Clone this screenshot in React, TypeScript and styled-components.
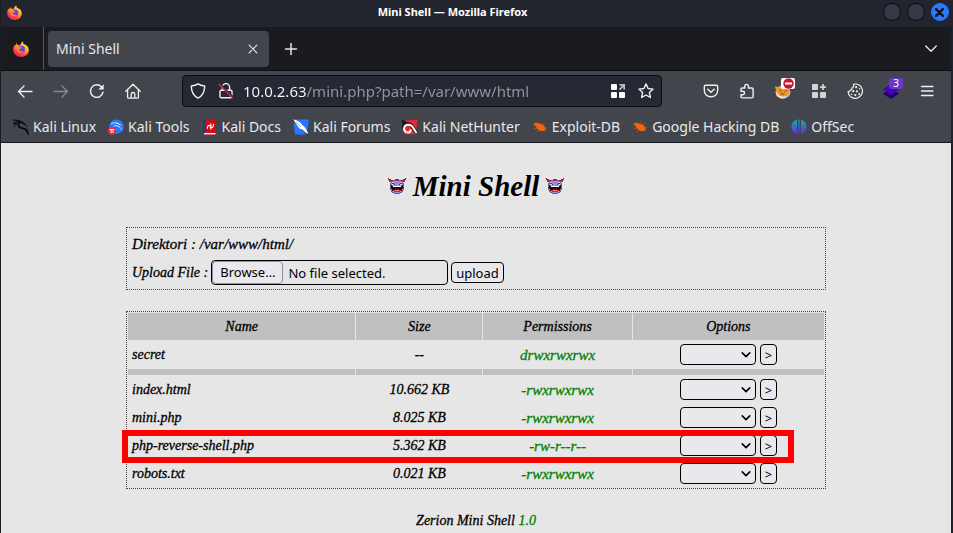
import React from "react";
import styled, { createGlobalStyle } from "styled-components";

const uiFont = `"Noto Sans", "Open Sans", sans-serif`;
const scriptFont = `"Z003", "URW Chancery L", "Monotype Corsiva", "Liberation Serif", serif`;

const GlobalStyle = createGlobalStyle`
  *, *::before, *::after { box-sizing: border-box; }
  body { margin: 0; background: #e6e6e6; overflow: hidden; }
  button, input, select { font: inherit; color: inherit; margin: 0; }
  svg { display: block; flex: none; }
`;

const Window = styled.div`
  display: flex;
  flex-direction: column;
  height: 100vh;
  overflow: hidden;
  border-left: 1px solid #1b1c22;
  border-right: 2px solid #1f222b;
  background: #e6e6e6;
  font-family: ${uiFont};
`;

const TitleBar = styled.header`
  display: flex;
  align-items: center;
  justify-content: space-between;
  flex: none;
  height: 27px;
  padding: 0 2px 3px 6px;
  background: #23252e;
  color: #fff;
`;

const WindowTitle = styled.span`
  font-size: 11px;
  line-height: 16px;
  font-weight: 700;
`;

const WindowButtons = styled.div`
  display: flex;
  justify-content: flex-end;
  gap: 6px;
`;

const WindowButton = styled.button<{ $close?: boolean }>`
  display: grid;
  place-items: center;
  width: 18px;
  height: 18px;
  padding: 0;
  border: 1px solid ${(p) => (p.$close ? "#2777ff" : "#0b0c0f")};
  border-radius: 50%;
  background: ${(p) => (p.$close ? "#2777ff" : "#353945")};
  color: ${(p) => (p.$close ? "#10131a" : "#fff")};
`;

const TabBar = styled.div`
  display: flex;
  align-items: center;
  flex: none;
  height: 44px;
  background: #1a1b1f;
  border-bottom: 1px solid #0e0f12;
  color: #e6e6e8;
`;

const PinnedTab = styled.button`
  display: grid;
  place-items: center;
  width: 43px;
  height: 43px;
  padding: 0 2px 0 0;
  border: 0;
  border-right: 1px solid #56585e;
  background: none;
`;

const Tab = styled.div`
  display: flex;
  align-items: center;
  justify-content: space-between;
  width: 221px;
  height: 36px;
  margin-left: 4px;
  padding: 0 8px;
  border-radius: 4px;
  background: #42454c;
  font-size: 14px;
  line-height: 20px;
`;

const IconButton = styled.button<{ $dim?: boolean }>`
  position: relative;
  display: grid;
  place-items: center;
  width: 36px;
  height: 32px;
  padding: 0;
  border: 0;
  background: none;
  opacity: ${(p) => (p.$dim ? 0.4 : 1)};
`;

const SmallButton = styled.button`
  display: grid;
  place-items: center;
  width: 16px;
  height: 20px;
  padding: 0;
  border: 0;
  background: none;
`;

const TabListButton = styled(IconButton)`
  margin: 0 2px 0 auto;
`;

const NewTabButton = styled(IconButton)`
  margin-left: 4px;
`;

const NavBar = styled.nav`
  display: flex;
  align-items: center;
  flex: none;
  height: 40px;
  padding: 0 6px;
  background: #42454c;
  color: #f0f0f1;
`;

const UrlBox = styled.div`
  display: flex;
  align-items: center;
  flex: 1;
  min-width: 0;
  height: 32px;
  margin: 0 31px;
  padding: 0 7px;
  border: 1px solid #0c0d10;
  border-radius: 4px;
  background: #262834;
  gap: 12px;
`;

const UrlInput = styled.input`
  flex: 1;
  min-width: 0;
  height: 24px;
  padding: 0;
  margin-left: -3px;
  border: 0;
  outline: 0;
  font-size: 15px;
  line-height: 24px;
  color: transparent;
  background: linear-gradient(90deg, #fbfbfe 64px, #96979e 64px);
  background-clip: text;
  -webkit-background-clip: text;
`;

const Bookmarks = styled.div`
  display: flex;
  align-items: center;
  flex: none;
  height: 32px;
  padding: 0 12px;
  gap: 12px;
  background: #42454c;
  border-bottom: 1px solid #17181c;
  color: #e9e9ea;
`;

const Bookmark = styled.a`
  display: flex;
  align-items: center;
  gap: 4px;
  color: inherit;
  text-decoration: none;
  white-space: nowrap;
  font-size: 14px;
  line-height: 20px;
`;

const Badge = styled.span<{ $alert?: boolean }>`
  position: absolute;
  top: 3px;
  left: 16px;
  display: grid;
  place-items: center;
  width: 14px;
  height: 11px;
  border-radius: 2px;
  background: ${(p) => (p.$alert ? "#fff" : "#6b38c8")};
  color: #fff;
  font-size: 10px;
  line-height: 11px;
`;

const Page = styled.main`
  display: flex;
  flex-direction: column;
  align-items: center;
  flex: 1;
  min-height: 0;
  overflow: hidden;
  padding: 22px 20px 0;
  color: #000;
  font-family: ${scriptFont};
  font-style: italic;
  font-size: 14px;
  line-height: 20px;
  -webkit-text-stroke: 0.3px currentColor;
`;

const Heading = styled.h1`
  display: flex;
  align-items: center;
  gap: 7px;
  height: 42px;
  margin: 0 0 20px;
  font-size: 29px;
  line-height: 42px;
  font-weight: 700;
  -webkit-text-stroke: 0;
`;

const Panel = styled.form`
  display: flex;
  flex-direction: column;
  width: 100%;
  max-width: 700px;
  height: 63px;
  margin-bottom: 21px;
  padding: 4px 5px;
  gap: 4px;
  border: 1px dotted #444;
`;

const PanelLine = styled.div`
  display: flex;
  align-items: center;
  min-height: 25px;
  gap: 3px;
`;

const DirectoryLine = styled.div`
  min-height: 24px;
  font-size: 15px;
  line-height: 24px;
`;

const FileBox = styled.span`
  position: relative;
  display: flex;
  align-items: center;
  width: 237px;
  height: 25px;
  border: 1px solid #000;
  border-radius: 4px;
  font: normal 13px/18px ${uiFont};
  -webkit-text-stroke: 0;
`;

const FileInput = styled.input`
  position: absolute;
  inset: 0;
  width: 100%;
  opacity: 0;
`;

const BrowseFace = styled.span`
  height: 23px;
  margin-right: 5px;
  padding: 0 7px;
  border: 1px solid #8f8f9d;
  border-radius: 4px;
  background: #e9e9ed;
  line-height: 21px;
`;

const PlainButton = styled.button`
  height: 21px;
  padding: 0 4px;
  border: 1px solid #000;
  border-radius: 4px;
  background: #e9e9ed;
  font: normal 13px/18px ${uiFont};
  -webkit-text-stroke: 0;
`;

const Listing = styled.table`
  width: 100%;
  max-width: 700px;
  table-layout: fixed;
  border-collapse: separate;
  border-spacing: 1px;
  border: 1px dotted #444;
`;

const HeadCell = styled.th<{ $share: number }>`
  width: ${(p) => p.$share / 10}%;
  height: 27px;
  padding: 0;
  background: #c0c0c0;
  font-weight: 400;
`;

const Row = styled.tr`
  position: relative;
`;

const Cell = styled.td<{ $left?: boolean; $green?: boolean }>`
  height: 27px;
  padding: 0 4px;
  text-align: ${(p) => (p.$left ? "left" : "center")};
  color: ${(p) => (p.$green ? "#008000" : "inherit")};
  font-size: ${(p) => (p.$green ? 15 : 14)}px;
`;

const DividerCell = styled.td`
  height: 6px;
  padding: 0;
  background: #c0c0c0;
`;

const Highlight = styled.span`
  position: absolute;
  z-index: 1;
  top: -2px;
  bottom: -4px;
  left: -6px;
  right: 30px;
  border: 6px solid #f00;
  pointer-events: none;
`;

const Options = styled.div`
  display: flex;
  justify-content: center;
  gap: 4px;
`;

const SelectWrap = styled.span`
  display: grid;
  width: 76px;
  height: 21px;
  align-items: center;
  > * { grid-area: 1 / 1; }
  > svg { justify-self: end; margin-right: 5px; pointer-events: none; }
`;

const Select = styled.select`
  appearance: none;
  width: 100%;
  height: 21px;
  border: 1px solid #000;
  border-radius: 4px;
  background: #e9e9ed;
`;

const Footer = styled.footer`
  margin-top: 22px;
  span { color: #008000; }
`;

const line = { fill: "none", stroke: "currentColor", strokeLinecap: "round", strokeLinejoin: "round" } as const;

const Firefox = ({ size, id }: { size: number; id: string }) => (
  <svg width={size} height={size} viewBox="0 0 16 16">
    <defs>
      <linearGradient id={id} x1="0.8" y1="0" x2="0.25" y2="1">
        <stop offset="0" stopColor="#fff04a" />
        <stop offset="0.45" stopColor="#ff9a2c" />
        <stop offset="0.75" stopColor="#ff4040" />
        <stop offset="1" stopColor="#e8188f" />
      </linearGradient>
    </defs>
    <path d="M10.2.2c-.3 1.500-.1 2.300.9 3.100C13.700 4 15.800 5.900 15.800 9c0 4-3.400 6.900-7.700 6.900S.2 12.700.2 8.700c0-2 .6-3.500 1.600-4.900l.3 1.200L3.600 2l.9 2c.9-.2 2 0 2.700.4C7.500 2.500 8.700 1 10.200.2Z" fill={`url(#${id})`} />
    <circle cx="8.500" cy="8.300" r="3.500" fill="#6b45d8" />
    <path d="M3.700 5.300c1.400-.6 2.800-.1 3.700.8l1.800.5c-.6 1-2.500.9-3 1.900-.3 1.200.8 2.300 2.300 1.800 1.300-.4 1.800.1 1.100.9-2.200 1.900-5.800.2-6-2.800Z" fill="#ff8a24" />
    <path d="M12.200 4.200c2 1.600 2.700 4.100 1.900 6.500-.1-2.300-.8-4.200-1.900-6.500Z" fill="#ffd83b" />
  </svg>
);

const Close = ({ width = 1.2, size = 10 }: { width?: number; size?: number }) => (
  <svg width={size} height={size} viewBox="0 0 10 10" {...line} strokeWidth={width}>
    <path d="m1.200 1.200 7.600 7.600m0-7.600-7.600 7.600" />
  </svg>
);

const Icon = ({ children, width = 1.3 }: { children: React.ReactNode; width?: number }) => (
  <svg width="16" height="16" viewBox="0 0 16 16" {...line} strokeWidth={width}>{children}</svg>
);

const Back = () => <Icon><path d="M15 8.500H1.500M7 3 1.500 8.500 7 14" /></Icon>;
const Forward = () => <Icon><path d="M1 8.500h13.500M9 3 14.500 8.500 9 14" /></Icon>;
const Reload = () => (
  <Icon width={1.4}>
    <path d="M14 9.200A6.300 6.300 0 1 1 12.600 4" />
    <path d="M14.700 1.200v5.300H9.400Z" fill="currentColor" stroke="none" />
  </Icon>
);
const Home = () => (
  <Icon><path d="m.8 8.300 7.200-7 7.200 7M2.600 7v7.300c0 .6.300.9.900.9h9c.6 0 .9-.3.9-.9V7M6.200 15v-4c0-2 3.600-2 3.600 0v4" /></Icon>
);
const Shield = () => (
  <Icon width={1.4}><path d="M8 .9c2 1.400 4.300 1.900 6.700 2.100 0 5.500-1.600 9.500-6.700 12.100C2.900 12.500 1.300 8.500 1.300 3 3.700 2.800 6 2.300 8 .9Z" /></Icon>
);
const InsecureLock = () => (
  <Icon width={1.4}>
    <path d="M4.400 7V4.200a3.600 3.600 0 0 1 7.200 0V7M3.300 7.300h9.400c.8 0 1.300.5 1.300 1.200v5c0 .7-.5 1.300-1.300 1.300H3.300c-.8 0-1.300-.6-1.300-1.300v-5c0-.7.5-1.200 1.300-1.200Z" />
    <path d="M2.600 1.500 15 13.900" stroke="#262834" strokeWidth="1.500" />
    <path d="M1.200 1.500 14.500 14.800" stroke="#e22850" />
  </Icon>
);
const AppGrid = () => (
  <svg width="16" height="16" viewBox="0 0 16 16" fill="#fff">
    <rect x="1" y="1" width="6" height="6" rx="1" /><rect x="1" y="9" width="6" height="6" rx="1" /><rect x="9" y="9" width="6" height="6" rx="1" />
    <path d="M9.500 1H15v5.500h-1.700V4l-3.200 3.200L8.900 6l3.200-3.300H9.500Z" fill="#bdbec2" />
  </svg>
);
const Star = () => (
  <Icon width={1.4}><path d="m8 .9 2.100 4.600 5 .6-3.700 3.400 1 5L8 12l-4.400 2.500 1-5L.9 6.100l5-.6Z" /></Icon>
);
const Pocket = () => (
  <Icon width={1.4}><path d="M2.800 2.300h10.400c.9 0 1.500.6 1.500 1.500v3.500c0 3.700-2.800 6.400-6.700 6.400S1.300 11 1.300 7.300V3.800c0-.9.600-1.500 1.500-1.500ZM4.800 6.300 8 9.300l3.200-3" /></Icon>
);
const Puzzle = () => (
  <Icon width={1.4}><path d="M2 8.300V6.100c0-.7.400-1.100 1.100-1.100h2.700V3.200c0-2.500 3.600-2.500 3.600 0V5h3.500c.8 0 1.200.4 1.200 1.100v7.700c0 .7-.4 1.100-1.200 1.100H3.100c-.7 0-1.100-.4-1.100-1.100v-2.100h1.800c2.300 0 2.300-3.400 0-3.400Z" /></Icon>
);
const Foxy = () => (
  <svg width="18" height="18" viewBox="0 0 18 18">
    <ellipse cx="9" cy="10" rx="7.500" ry="6.800" fill="#b8b4ae" />
    <path d="m.8 4 3.500 1.500h8L15 7c1 4-1.500 7-6 7.500C4.500 14.500 2 11.500 2 8Z" fill="#f49425" />
    <path d="m1.700 9 3.300 4.500 4 1.200 3-.7-1 2-4 .5-4-2.500Z" fill="#fbe6cd" />
    <path d="m5.500 8 2 1.500M12.500 8l-2 2M6.500 12h4" stroke="#6c4a25" fill="none" />
  </svg>
);
const NoEntry = () => (
  <svg width="11" height="11" viewBox="0 0 11 11"><circle cx="5.500" cy="5.500" r="5.200" fill="#c41930" /><rect x="2" y="4.500" width="7" height="2" fill="#fff" /></svg>
);
const AddGrid = () => (
  <svg width="16" height="16" viewBox="0 0 16 16" fill="#d2d3d5">
    <rect x="1" y="1" width="6" height="6" rx="1" /><rect x="1" y="9" width="6" height="6" rx="1" /><rect x="9" y="9" width="6" height="6" rx="1" />
    <path d="M11.200 1h1.700v2.200H15v1.700h-2.100V7h-1.700V4.900H9V3.200h2.200Z" />
  </svg>
);
const Cookie = () => (
  <Icon width={1.2}>
    <path d="M6.500 1.300C8 .9 10 .9 11.500 1.700a7.200 7.200 0 1 1-10.400 7c1.300.2 2-.4 2-1.600 1.400 0 2.100-.8 1.800-2.100 1.500-.3 2.200-1.700 1.600-3.700Z" />
    <g fill="currentColor" stroke="none"><circle cx="9.200" cy="4.200" r="1.100" /><circle cx="6.300" cy="8.200" r="1.100" /><circle cx="10" cy="8.300" r="1.100" /><circle cx="12.600" cy="5.800" r=".8" /><circle cx="8.300" cy="12" r="1.100" /><circle cx="12.200" cy="11" r=".9" /><circle cx="4.600" cy="11.300" r=".8" /></g>
  </Icon>
);
const Layers = () => (
  <svg width="18" height="18" viewBox="0 0 18 18"><path d="m9 6.500 8 5L9 17l-8-5.500Z" fill="#20006d" /><path d="m9 1.800 8 5.600-8 5.600-8-5.600Z" fill="#4a00b4" /></svg>
);
const Menu = () => <Icon><path d="M2.500 3.500h11.500M2.500 8h11.500M2.500 12.500h11.500" /></Icon>;

const KaliLinux = () => (
  <svg width="16" height="16" viewBox="0 0 16 16" fill="none" stroke="#08090b" strokeLinecap="round">
    <path d="M.8 1.200C3.500 1 6.500 1.500 9 3.200" strokeWidth="1.200" />
    <path d="M.9 4.700C3 3 6 2.700 9 3.500l2.500 1.700" strokeWidth="1.600" />
    <path d="M1.200 7.500C2.500 5.500 4.200 4.800 6 4.500" strokeWidth="1" />
    <path d="M6 4.300C5 6 5.300 8.200 8 8.800c3.500.6 6 1.400 7 6.200" strokeWidth="1.700" />
    <path d="M9.500 3.500c.7 1.500 2.500 1.700 4.700 4M8.500 9.200c2.500.3 4.500.5 6.500 2" strokeWidth="1" />
  </svg>
);
const KaliTools = () => (
  <svg width="16" height="16" viewBox="0 0 16 16">
    <circle cx="8.500" cy="7.700" r="7.300" fill="#2777ff" />
    <path d="M3 5c3-2 6-1.500 8.500.8M5.500 7.200c3-1.500 6.500.3 8 3.300M8 4.200c2 .2 4 1 5.200 2.500" stroke="#dbe9ff" strokeWidth="1" fill="none" />
    <circle cx="4" cy="11.700" r="4" fill="#ee2d36" />
    <path d="M1.700 10.500h4.600M3.200 10.500v3.400M5 10.500v3.400" stroke="#fff" fill="none" />
  </svg>
);
const KaliDocs = () => (
  <svg width="16" height="16" viewBox="0 0 16 16">
    <path d="M1.500.5h12v15h-12Z" fill="#d30f14" /><path d="M1.500.5h2v14h-2Z" fill="#14407d" /><path d="M2 14h11.500v1.400H2Z" fill="#efefef" />
    <path d="M11.500 5c-.2 3-1.200 4-2.500 3.500-1.500-.6-.5-2-2-2.300-1.300 0-1.600 2-1.500 3.600M8.800 4.500v6" stroke="#fff" strokeWidth="1.100" fill="none" />
  </svg>
);
const KaliForums = () => (
  <svg width="16" height="16" viewBox="0 0 16 16">
    <path d="M0 .5h16L13.700 15.500H2Z" fill="#2777ff" />
    <path d="M0 .5 8 8l7.500 7.500" stroke="#17191f" strokeWidth="2.500" fill="none" />
    <path d="M0 .3c4 1 7 2.700 8.500 4.500.2 1 .8 1.500 1.700 2C12.500 8.500 14 11.500 15.700 15.500c-3-1.500-5-3.500-6.200-5-1.500.2-3.500-1-4.500-3C3.500 5.500 2 3.500 0 .3Z" fill="#fff" />
    <path d="M3 3.200 8 8" stroke="#8e9299" strokeWidth=".7" />
  </svg>
);
const NetHunter = () => (
  <svg width="16" height="16" viewBox="0 0 16 16">
    <path d="M3 1.500 15.500.7l-2 14.500H3L.8 8Z" fill="#ed2633" />
    <path d="M0 .5 6.500 4 .8 8Z" fill="#17191f" />
    <path d="M1.500 9.500C1.500 5.500 6 3.500 9.300 6.200L14.500 14" stroke="#17191f" strokeWidth="3.500" fill="none" />
    <path d="M4.500 13.500C.5 11 2 6.300 5.500 5.800c4.500-.8 5.500 3.200 9 8.200M5 13.500c2.500.5 4-1 3.500-3" stroke="#fff" strokeWidth="2" fill="none" />
  </svg>
);
const ExploitBug = () => (
  <svg width="16" height="16" viewBox="0 0 16 16">
    <path d="M2 4.300c2-.9 4.200-.4 5.500.6 3.500 0 6 2 6.300 5.600-2 2.400-6.300 1.800-8.200-.6C4.200 9.200 3.300 8 3.500 6.700 2.500 6.200 2 5.300 2 4.300Z" fill="#f0640f" />
    <path d="M4.500 6.500.8 6M5.500 9l-3.700.7M7 11l-2.500 2M7.500 5 9 2.800M10 6l2.800-1.400M12.500 8.500l2.700.3M12 11l2 2" stroke="#a9571f" strokeWidth=".8" fill="none" />
  </svg>
);
const OffSec = () => (
  <svg width="16" height="16" viewBox="0 0 16 16">
    <defs><linearGradient id="offsec" x1="0" y1="0" x2="0" y2="1"><stop offset="0" stopColor="#0eb0b2" /><stop offset="1" stopColor="#6725d5" /></linearGradient></defs>
    <path d="M6 .7v14.600C2.800 14.500.5 11.700.5 8S2.800 1.500 6 .7ZM10 .7c3.200.8 5.500 3.600 5.500 7.300s-2.300 6.500-5.500 7.300ZM7.400.5h1.200v15H7.400Z" fill="url(#offsec)" />
  </svg>
);

const Devil = () => (
  <svg width="18" height="17" viewBox="0 0 18 17" shapeRendering="crispEdges">
    <path d="M5 2h8v1h2v2h1v7h-1v2h-1v1h-2v1H6v-1H4v-1H3v-2H2V5h1V3h2Z" fill="#6d6389" />
    <path d="M5 3h8v1h1v1h1v7h-1v2h-2v1H6v-1H4v-2H3V5h1V4h1Z" fill="#a286e8" />
    <path d="M4 6h3v1H4ZM11 6h3v1h-3ZM4 4h2v1H4ZM12 4h2v1h-2Z" fill="#d6c9ff" />
    <path d="M4 5h2v1h1v1H6V6H4ZM14 5h-2v1h-1v1h1V6h2Z" fill="#3a2b66" />
    <path d="M3 7h1v1h10V7h1v4h-1v2h-2v1H6v-1H4v-2H3Z" fill="#120d16" />
    <path d="M5 8h8v1H5Z" fill="#fff" />
    <path d="M5 12h2v-1h1v1h2v-1h1v1h2v1h-1v1H6v-1H5Z" fill="#ee1c24" />
    <path d="M7 12h4v1H7Z" fill="#ff7a7f" />
    <path d="M7 14h4v1H7Z" fill="#7f9ce0" />
    <path d="M0 0h1v1h2v1h2v1H3v1H1V2H0ZM17 0h1v2h-1v2h-2V3h-2V2h2V1h2ZM7 1h4v1h-1v1H8V2H7Z" fill="#a8243c" />
  </svg>
);

const Chevron = ({ size = 12, width = 1.5 }: { size?: number; width?: number }) => (
  <svg width={size} height={size} viewBox="0 0 12 12" {...line} strokeWidth={width}><path d="m1.500 3.500 4.500 4.500 4.500-4.500" /></svg>
);

const bookmarks = [
  { name: "Kali Linux", icon: <KaliLinux /> },
  { name: "Kali Tools", icon: <KaliTools /> },
  { name: "Kali Docs", icon: <KaliDocs /> },
  { name: "Kali Forums", icon: <KaliForums /> },
  { name: "Kali NetHunter", icon: <NetHunter /> },
  { name: "Exploit-DB", icon: <ExploitBug /> },
  { name: "Google Hacking DB", icon: <ExploitBug /> },
  { name: "OffSec", icon: <OffSec /> },
];

type Entry = { name: string; size: string; mode: string; marked?: boolean };

const directories: Entry[] = [{ name: "secret", size: "--", mode: "drwxrwxrwx" }];
const files: Entry[] = [
  { name: "index.html", size: "10.662 KB", mode: "-rwxrwxrwx" },
  { name: "mini.php", size: "8.025 KB", mode: "-rwxrwxrwx" },
  { name: "php-reverse-shell.php", size: "5.362 KB", mode: "-rw-r--r--", marked: true },
  { name: "robots.txt", size: "0.021 KB", mode: "-rwxrwxrwx" },
];

const EntryRow = ({ entry }: { entry: Entry }) => (
  <Row>
    <Cell $left>{entry.name}{entry.marked && <Highlight />}</Cell>
    <Cell>{entry.size}</Cell>
    <Cell $green>{entry.mode}</Cell>
    <Cell>
      <Options>
        <SelectWrap>
          <Select aria-label={`Options ${entry.name}`}><option value="" /></Select>
          <Chevron size={10} width={1.9} />
        </SelectWrap>
        <PlainButton type="button">&gt;</PlainButton>
      </Options>
    </Cell>
  </Row>
);

export default function App() {
  return (
    <Window>
      <GlobalStyle />
      <TitleBar>
        <Firefox size={15} id="fox-title" />
        <WindowTitle>Mini Shell — Mozilla Firefox</WindowTitle>
        <WindowButtons>
          <WindowButton aria-label="Minimize" />
          <WindowButton aria-label="Maximize" />
          <WindowButton $close aria-label="Close"><Close width={2.5} size={9} /></WindowButton>
        </WindowButtons>
      </TitleBar>
      <TabBar>
        <PinnedTab aria-label="Firefox"><Firefox size={16} id="fox-tab" /></PinnedTab>
        <Tab>Mini Shell<SmallButton aria-label="Close tab"><Close /></SmallButton></Tab>
        <NewTabButton aria-label="New tab"><Icon width={1.5}><path d="M8 2.500v11M2.500 8h11" /></Icon></NewTabButton>
        <TabListButton aria-label="List tabs"><Chevron size={14} width={1.2} /></TabListButton>
      </TabBar>
      <NavBar>
        <IconButton aria-label="Back"><Back /></IconButton>
        <IconButton $dim aria-label="Forward"><Forward /></IconButton>
        <IconButton aria-label="Reload"><Reload /></IconButton>
        <IconButton aria-label="Home"><Home /></IconButton>
        <UrlBox>
          <SmallButton aria-label="Tracking protection"><Shield /></SmallButton>
          <SmallButton aria-label="Connection"><InsecureLock /></SmallButton>
          <UrlInput aria-label="Address" defaultValue="10.0.2.63/mini.php?path=/var/www/html" />
          <SmallButton aria-label="Containers"><AppGrid /></SmallButton>
          <SmallButton aria-label="Bookmark"><Star /></SmallButton>
        </UrlBox>
        <IconButton aria-label="Pocket"><Pocket /></IconButton>
        <IconButton aria-label="Extensions"><Puzzle /></IconButton>
        <IconButton aria-label="Proxy"><Foxy /><Badge $alert><NoEntry /></Badge></IconButton>
        <IconButton aria-label="Add container"><AddGrid /></IconButton>
        <IconButton aria-label="Cookies"><Cookie /></IconButton>
        <IconButton aria-label="Technologies"><Layers /><Badge>3</Badge></IconButton>
        <IconButton aria-label="Menu"><Menu /></IconButton>
      </NavBar>
      <Bookmarks>
        {bookmarks.map((b) => <Bookmark href="#" key={b.name}>{b.icon}{b.name}</Bookmark>)}
      </Bookmarks>
      <Page>
        <Heading><Devil />Mini Shell<Devil /></Heading>
        <Panel>
          <DirectoryLine>Direktori : /var/www/html/</DirectoryLine>
          <PanelLine>
            <label htmlFor="upload-file">Upload File :</label>
            <FileBox>
              <BrowseFace>Browse…</BrowseFace>No file selected.
              <FileInput type="file" id="upload-file" />
            </FileBox>
            <PlainButton type="button">upload</PlainButton>
          </PanelLine>
        </Panel>
        <Listing>
          <thead>
            <tr>
              <HeadCell $share={328}>Name</HeadCell>
              <HeadCell $share={182}>Size</HeadCell>
              <HeadCell $share={214}>Permissions</HeadCell>
              <HeadCell $share={276}>Options</HeadCell>
            </tr>
          </thead>
          <tbody>
            {directories.map((e) => <EntryRow entry={e} key={e.name} />)}
            <tr><DividerCell /><DividerCell /><DividerCell /><DividerCell /></tr>
            {files.map((e) => <EntryRow entry={e} key={e.name} />)}
          </tbody>
        </Listing>
        <Footer>Zerion Mini Shell <span>1.0</span></Footer>
      </Page>
    </Window>
  );
}
